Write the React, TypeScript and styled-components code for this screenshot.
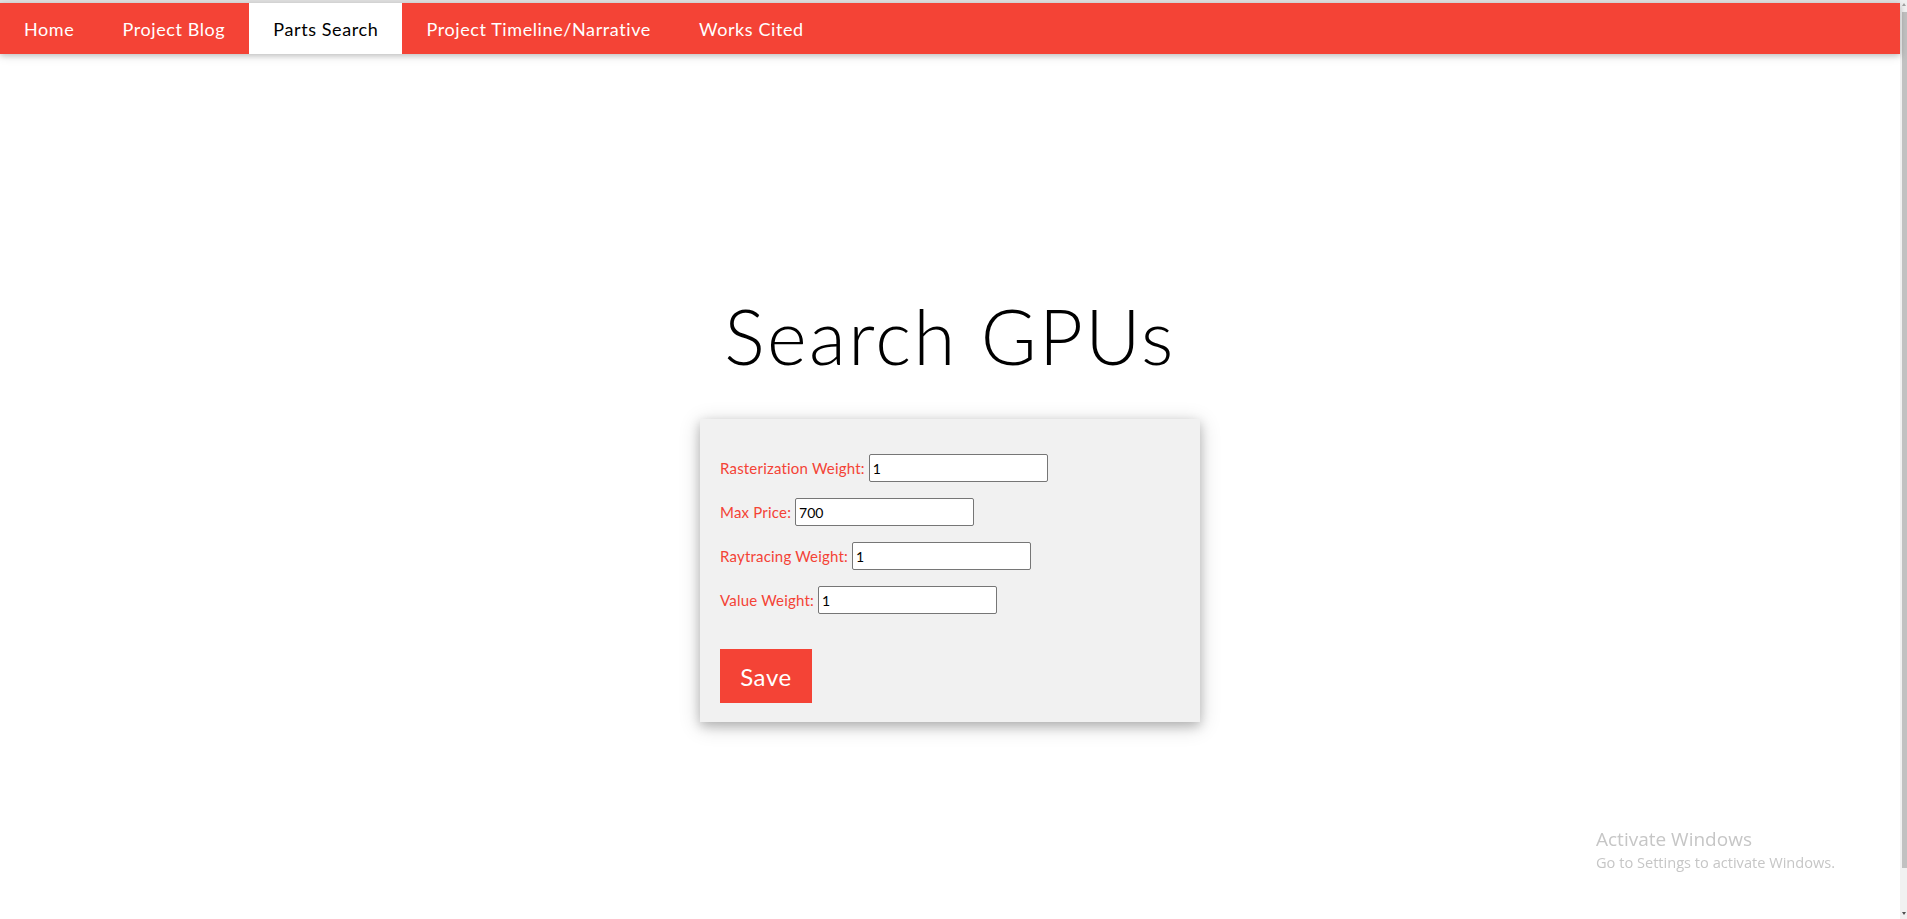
import React from 'react'
import styled, { createGlobalStyle } from 'styled-components'

const RED = '#f44336'

const GlobalStyle = createGlobalStyle`
  html, body {
    margin: 0;
    padding: 0;
    overflow: hidden;
    background: #fff;
  }
  body {
    font-family: Lato, "Liberation Sans", sans-serif;
    font-size: 15px;
    line-height: 1.5;
  }
`

const Frame = styled.div`
  display: flex;
  width: 100vw;
  height: 100vh;
`

const Page = styled.div`
  flex: 1;
  display: flex;
  flex-direction: column;
  min-width: 0;
`

const TopStrip = styled.div`
  height: 3px;
  background: #e2e2e2;
`

const NavBar = styled.nav`
  display: flex;
  background: ${RED};
  box-shadow: 0 2px 5px 0 rgba(0, 0, 0, 0.16), 0 2px 10px 0 rgba(0, 0, 0, 0.12);
  position: relative;
  z-index: 2;
`

const NavItem = styled.a<{ active?: boolean }>`
  display: block;
  padding: 13px 24px 11px;
  font-size: 18px;
  line-height: 27px;
  letter-spacing: 0.6px;
  text-decoration: none;
  white-space: nowrap;
  color: ${p => (p.active ? '#000' : '#fff')};
  background: ${p => (p.active ? '#fff' : 'transparent')};
`

const Content = styled.main`
  display: flex;
  flex-direction: column;
  align-items: center;
  padding-top: 236px;
`

const Title = styled.h1`
  margin: 0 0 38px;
  font-size: 76px;
  line-height: 1.2;
  font-weight: 300;
  letter-spacing: 2.4px;
  color: #000;
`

const Card = styled.form`
  width: 500px;
  box-sizing: border-box;
  padding: 35px 20px 19px;
  background: #f1f1f1;
  box-shadow: 0 4px 10px 0 rgba(0, 0, 0, 0.2), 0 4px 20px 0 rgba(0, 0, 0, 0.19);
  display: flex;
  flex-direction: column;
`

const Fields = styled.div`
  display: flex;
  flex-direction: column;
  gap: 16px;
  margin-bottom: 35px;
`

const Row = styled.div`
  display: flex;
  align-items: center;
  height: 28px;
`

const Label = styled.label`
  color: ${RED};
  font-size: 15px;
  letter-spacing: 0.2px;
  margin-right: 4px;
`

const Input = styled.input`
  box-sizing: border-box;
  width: 179px;
  height: 28px;
  padding: 1px 3px;
  border: 1px solid #767676;
  border-radius: 2px;
  background: #fff;
  font-family: Lato, "Liberation Sans", sans-serif;
  font-size: 14px;
  color: #000;
  outline: none;
`

const SaveButton = styled.button`
  align-self: flex-start;
  width: 92px;
  height: 54px;
  padding: 0;
  border: none;
  background: ${RED};
  color: #fff;
  font-family: Lato, "Liberation Sans", sans-serif;
  font-size: 24px;
  letter-spacing: 0.6px;
  cursor: pointer;
`

const ScrollTrack = styled.div`
  width: 7px;
  height: 100vh;
  background: #f1f1f1;
  display: flex;
  flex-direction: column;
  align-items: flex-end;
  box-sizing: border-box;
  padding: 3px 0 4px;
`

const Arrow = styled.div<{ down?: boolean }>`
  width: 0;
  height: 0;
  margin-right: 1px;
  border-left: 2px solid transparent;
  border-right: 2px solid transparent;
  ${p => (p.down ? 'border-top: 3px solid #505050;' : 'border-bottom: 3px solid #a3a3a3;')}
`

const Thumb = styled.div`
  width: 5px;
  height: 856px;
  margin-top: 6px;
  background: #c1c1c1;
`

const Spacer = styled.div`
  flex: 1;
`

const Watermark = styled.div`
  position: fixed;
  left: 1596px;
  top: 827px;
  color: #c6c6c6;
  font-family: "Open Sans", "Noto Sans", sans-serif;
  pointer-events: none;
`

const WatermarkTitle = styled.div`
  font-size: 19px;
  line-height: 24px;
`

const WatermarkText = styled.div`
  font-size: 14.6px;
  line-height: 22px;
`

const fields = [
  { label: 'Rasterization Weight:', value: '1' },
  { label: 'Max Price:', value: '700' },
  { label: 'Raytracing Weight:', value: '1' },
  { label: 'Value Weight:', value: '1' },
]

const navLinks = ['Home', 'Project Blog', 'Parts Search', 'Project Timeline/Narrative', 'Works Cited']

export default function App() {
  return (
    <>
      <GlobalStyle />
      <Frame>
        <Page>
          <TopStrip />
          <NavBar>
            {navLinks.map(link => (
              <NavItem key={link} href="#" active={link === 'Parts Search'}>
                {link}
              </NavItem>
            ))}
          </NavBar>
          <Content>
            <Title>Search GPUs</Title>
            <Card onSubmit={e => e.preventDefault()}>
              <Fields>
                {fields.map(f => (
                  <Row key={f.label}>
                    <Label>{f.label}</Label>
                    <Input type="text" defaultValue={f.value} />
                  </Row>
                ))}
              </Fields>
              <SaveButton type="submit">Save</SaveButton>
            </Card>
          </Content>
        </Page>
        <ScrollTrack>
          <Arrow />
          <Thumb />
          <Spacer />
          <Arrow down />
        </ScrollTrack>
      </Frame>
      <Watermark>
        <WatermarkTitle>Activate Windows</WatermarkTitle>
        <WatermarkText>Go to Settings to activate Windows.</WatermarkText>
      </Watermark>
    </>
  )
}
